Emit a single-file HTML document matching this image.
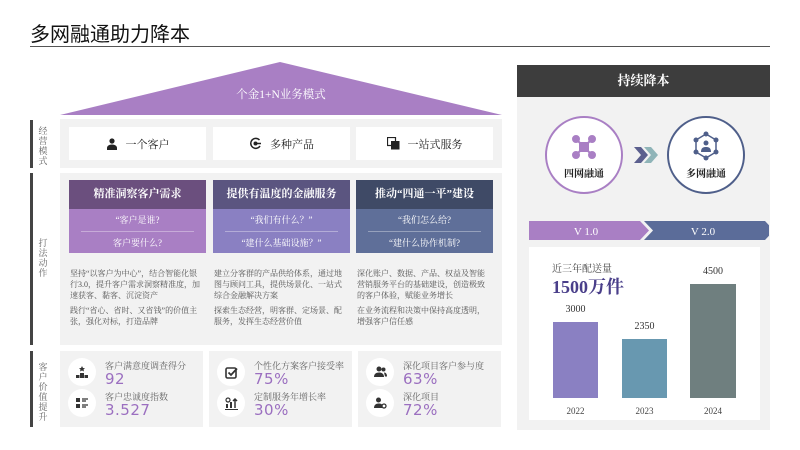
<!DOCTYPE html>
<html><head><meta charset="utf-8"><style>
*{margin:0;padding:0;box-sizing:border-box}
body{width:800px;height:450px;background:#fff;position:relative;overflow:hidden;font-family:"Liberation Serif","Noto Serif CJK SC",serif;color:#333}
.a{position:absolute}
.sans{font-family:"Liberation Sans","Noto Sans CJK SC",sans-serif}
.bar{position:absolute;left:30px;width:3px;background:#444}
.vl{position:absolute;left:37px;width:12px;font-size:9px;line-height:10px;color:#666;text-align:center}
.gray{position:absolute;background:#f2f2f2}
.card{position:absolute;background:#fff;top:127px;height:33px;width:137px;display:flex;align-items:center;justify-content:center;font-size:11px;color:#222}
.card svg{margin-right:8px}
.hd{position:absolute;top:180px;width:137px;height:29px;color:#fff;font-size:11px;font-weight:bold;text-align:center;line-height:29px}
.sub{position:absolute;top:209px;width:137px;height:44px;color:#fff;font-size:9px;text-align:center}
.sub div{height:22px;line-height:22px}
.sub hr{border:0;border-top:1px solid rgba(255,255,255,.35);margin:0 12px}
.p{position:absolute;width:131px;font-size:8px;line-height:11px;color:#555}
.kp{position:absolute;width:143px;height:76px;top:351px;background:#f2f2f2}
.ic{position:absolute;left:8px;width:28px;height:28px;border-radius:50%;background:#fff;display:flex;align-items:center;justify-content:center}
.kl{position:absolute;left:45px;font-size:9px;color:#666;line-height:10px}
.kv{position:absolute;left:45px;font-size:15px;line-height:15px;color:#9b6fc0;font-family:"DejaVu Sans","Liberation Sans",sans-serif;letter-spacing:.5px}
</style></head><body>
<div class="a sans" style="left:30px;top:18px;font-size:20px;color:#111">多网融通助力降本</div>
<div class="a" style="left:30px;top:46px;width:740px;height:1px;background:#555"></div>

<svg class="a" style="left:60px;top:62px" width="442" height="54"><polygon points="220,0 442,53 0,53" fill="#a97fc4"/><text x="221" y="36" text-anchor="middle" fill="#fff" font-size="11.5" font-family="Liberation Serif,Noto Serif CJK SC,serif">个金1+N业务模式</text></svg>

<div class="bar" style="top:120px;height:48px"></div><div class="vl" style="top:126px">经营模式</div>
<div class="bar" style="top:173px;height:172px"></div><div class="vl" style="top:238px">打法动作</div>
<div class="bar" style="top:351px;height:76px"></div><div class="vl" style="top:362px">客户价值提升</div>

<div class="gray" style="left:60px;top:119px;width:442px;height:49px"></div>
<div class="card" style="left:69px"><svg width="12" height="12" viewBox="0 0 12 12"><circle cx="6" cy="3" r="2.6" fill="#222"/><path d="M1 12v-2c0-2 2-3.5 5-3.5s5 1.5 5 3.5v2z" fill="#222"/></svg>一个客户</div>
<div class="card" style="left:213px"><svg width="13" height="13" viewBox="0 0 13 13"><path d="M10.5 3A5 5 0 1 0 11 9" stroke="#222" stroke-width="1.5" fill="none"/><circle cx="6.5" cy="6.5" r="2" fill="#222"/><path d="M7 6.5h5" stroke="#222" stroke-width="1.5"/></svg>多种产品</div>
<div class="card" style="left:356px"><svg width="13" height="13" viewBox="0 0 13 13"><rect x="0.5" y="0.5" width="8" height="8" fill="none" stroke="#222" stroke-width="1.2"/><rect x="4" y="4" width="8.5" height="8.5" fill="#222"/></svg>一站式服务</div>

<div class="gray" style="left:60px;top:173px;width:442px;height:172px"></div>
<div class="hd" style="left:69px;background:#6b4f7e">精准洞察客户需求</div>
<div class="hd" style="left:213px;background:#5b5580">提供有温度的金融服务</div>
<div class="hd" style="left:356px;background:#3f4a66">推动“四通一平”建设</div>
<div class="sub" style="left:69px;background:#a97fc4"><div>“客户是谁?</div><hr><div>客户要什么?</div></div>
<div class="sub" style="left:213px;background:#8a80c2"><div>“我们有什么？”</div><hr><div>“建什么基础设施？”</div></div>
<div class="sub" style="left:356px;background:#5f6f99"><div>“我们怎么给?</div><hr><div>“建什么协作机制?</div></div>
<div class="p" style="left:70px;top:268px">坚持“以客户为中心”，结合智能化银行3.0，提升客户需求洞察精准度，加速获客、黏客、沉淀资产<br><span style="display:block;height:4px"></span>践行“省心、省时、又省钱”的价值主张，强化对标，打造品牌</div>
<div class="p" style="left:214px;top:268px">建立分客群的产品供给体系，通过地图与顾问工具，提供场景化、一站式综合金融解决方案<br><span style="display:block;height:4px"></span>探索生态经营，明客群、定场景、配服务，发挥生态经营价值</div>
<div class="p" style="left:357px;top:268px">深化账户、数据、产品、权益及智能营销服务平台的基础建设，创造极致的客户体验，赋能业务增长<br><span style="display:block;height:4px"></span>在业务流程和决策中保持高度透明，增强客户信任感</div>

<div class="kp" style="left:60px">
<div class="ic" style="top:7px"><svg width="12" height="12" viewBox="0 0 12 12"><path d="M6 0l1 2 2 .2-1.5 1.3.5 2L6 4.5 4 5.5l.5-2L3 2.2 5 2z" fill="#333"/><rect x="4" y="7" width="4" height="5" fill="#333"/><rect x="0" y="9" width="3.5" height="3" fill="#333"/><rect x="8.5" y="9" width="3.5" height="3" fill="#333"/></svg></div>
<div class="kl" style="top:10px">客户满意度调查得分</div><div class="kv" style="top:21px">92</div>
<div class="ic" style="top:38px"><svg width="12" height="12" viewBox="0 0 12 12"><rect x="0" y="1" width="4" height="4" fill="#333"/><rect x="0" y="7" width="4" height="4" fill="#333"/><path d="M6 2h6M6 4h4M6 8h6M6 10h4" stroke="#333" stroke-width="1.2"/></svg></div>
<div class="kl" style="top:41px">客户忠诚度指数</div><div class="kv" style="top:52px">3.527</div>
</div>
<div class="kp" style="left:209px">
<div class="ic" style="top:7px"><svg width="13" height="13" viewBox="0 0 13 13"><rect x="1" y="2" width="10" height="10" rx="1.5" fill="none" stroke="#333" stroke-width="1.6"/><path d="M3.5 6.5l2.5 2.5 6-6.5" stroke="#333" stroke-width="1.8" fill="none"/></svg></div>
<div class="kl" style="top:10px">个性化方案客户接受率</div><div class="kv" style="top:21px">75%</div>
<div class="ic" style="top:38px"><svg width="13" height="13" viewBox="0 0 13 13"><circle cx="3" cy="3" r="2" fill="none" stroke="#333" stroke-width="1.2"/><rect x="1" y="7" width="2" height="4" fill="#333"/><rect x="5" y="5" width="2" height="6" fill="#333"/><path d="M10 11V2M8 4l2-2 2 2" stroke="#333" stroke-width="1.5" fill="none"/><path d="M0 12.5h13" stroke="#333"/></svg></div>
<div class="kl" style="top:41px">定制服务年增长率</div><div class="kv" style="top:52px">30%</div>
</div>
<div class="kp" style="left:358px">
<div class="ic" style="top:7px"><svg width="13" height="12" viewBox="0 0 13 12"><circle cx="5" cy="3" r="2.5" fill="#333"/><path d="M0 11c0-3 2-4.5 5-4.5s5 1.5 5 4.5z" fill="#333"/><circle cx="9.5" cy="3.5" r="2" fill="#333"/><path d="M10 6.5c2 0 3 1.5 3 4h-2" fill="#333"/></svg></div>
<div class="kl" style="top:10px">深化项目客户参与度</div><div class="kv" style="top:21px">63%</div>
<div class="ic" style="top:38px"><svg width="13" height="12" viewBox="0 0 13 12"><circle cx="4.5" cy="3" r="2.5" fill="#333"/><path d="M0 11c0-3 2-4.5 4.5-4.5S8 7 8 8v3z" fill="#333"/><circle cx="10" cy="9" r="2" fill="none" stroke="#333" stroke-width="1.3"/></svg></div>
<div class="kl" style="top:41px">深化项目</div><div class="kv" style="top:52px">72%</div>
</div>

<div class="gray" style="left:517px;top:65px;width:253px;height:365px"></div>
<div class="a" style="left:517px;top:65px;width:253px;height:32px;background:#3d3d3d;color:#fff;font-size:13px;font-weight:bold;text-align:center;line-height:32px">持续降本</div>
<svg class="a" style="left:517px;top:97px" width="253" height="150">
<circle cx="67" cy="58" r="38" fill="#fff" stroke="#a97fc4" stroke-width="2"/>
<circle cx="189" cy="58" r="38" fill="#fff" stroke="#4f5f8a" stroke-width="2"/>
<g fill="#a97fc4" stroke="#a97fc4" stroke-width="2"><path d="M59 42l16 16M75 42l-16 16"/><circle cx="59" cy="42" r="3"/><circle cx="75" cy="42" r="3"/><circle cx="59" cy="58" r="3"/><circle cx="75" cy="58" r="3"/><rect x="63" y="46" width="8" height="8"/></g>
<text x="67" y="80" text-anchor="middle" font-size="10" font-weight="bold" fill="#222" font-family="Liberation Serif,Noto Serif CJK SC,serif">四网融通</text>
<g fill="none" stroke="#4f5f8a" stroke-width="1.5"><polygon points="189,37 199,43 199,55 189,61 179,55 179,43"/></g>
<g fill="#4f5f8a"><circle cx="189" cy="37" r="2.5"/><circle cx="199" cy="43" r="2.5"/><circle cx="199" cy="55" r="2.5"/><circle cx="189" cy="61" r="2.5"/><circle cx="179" cy="55" r="2.5"/><circle cx="179" cy="43" r="2.5"/><circle cx="189" cy="46" r="2.5"/><path d="M184 55c0-4 2-5 5-5s5 1 5 5z"/></g>
<text x="189" y="80" text-anchor="middle" font-size="10" font-weight="bold" fill="#222" font-family="Liberation Serif,Noto Serif CJK SC,serif">多网融通</text>
<polygon points="117,50 124,50 131,58 124,66 117,66 124,58" fill="#5b5f8e"/>
<polygon points="127,50 134,50 141,58 134,66 127,66 134,58" fill="#8fb4b8"/>
</svg>
<svg class="a" style="left:529px;top:221px" width="240" height="19">
<polygon points="0,0 111,0 120,9.5 111,19 0,19" fill="#a97fc4"/>
<polygon points="115,0 236,0 245,9.5 236,19 115,19 124,9.5" fill="#5b6c99"/>
<text x="57" y="14" text-anchor="middle" fill="#fff" font-size="11" font-family="Liberation Serif,serif">V 1.0</text>
<text x="174" y="14" text-anchor="middle" fill="#fff" font-size="11" font-family="Liberation Serif,serif">V 2.0</text>
</svg>
<div class="a" style="left:529px;top:247px;width:231px;height:173px;background:#fff"></div>
<div class="a" style="left:552px;top:260px;font-size:10px;color:#444">近三年配送量</div>
<div class="a" style="left:552px;top:273px;font-size:18px;color:#4a3f8a;font-weight:bold">1500万件</div>
<div class="a" style="left:553px;top:322px;width:45px;height:76px;background:#8a80c2"></div>
<div class="a" style="left:622px;top:339px;width:45px;height:59px;background:#6898b0"></div>
<div class="a" style="left:690px;top:284px;width:46px;height:114px;background:#6f7f7f"></div>
<div class="a" style="left:553px;top:304px;width:45px;text-align:center;font-size:10px">3000</div>
<div class="a" style="left:622px;top:321px;width:45px;text-align:center;font-size:10px">2350</div>
<div class="a" style="left:690px;top:266px;width:46px;text-align:center;font-size:10px">4500</div>
<div class="a" style="left:553px;top:406px;width:45px;text-align:center;font-size:9px;color:#444">2022</div>
<div class="a" style="left:622px;top:406px;width:45px;text-align:center;font-size:9px;color:#444">2023</div>
<div class="a" style="left:690px;top:406px;width:46px;text-align:center;font-size:9px;color:#444">2024</div>
</body></html>
